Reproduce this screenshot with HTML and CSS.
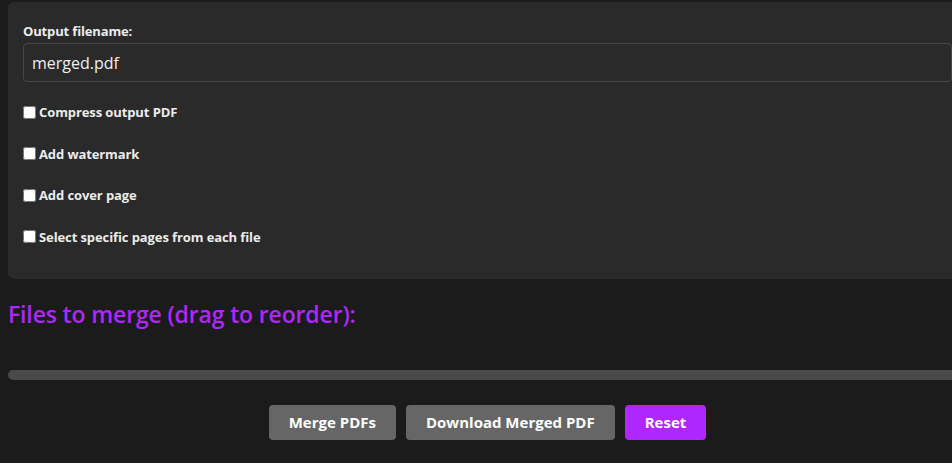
FILE: index.html
```html
<!DOCTYPE html>
<html lang="en">
<head>
<meta charset="utf-8">
<title>Merge PDFs</title>
<link rel="stylesheet" href="styles.css">
</head>
<body>
<main class="container">
  <section class="panel">
    <label class="field-label" for="outname">Output filename:</label>
    <input id="outname" class="text-input" type="text" value="merged.pdf">
    <div class="options">
      <label class="option"><input type="checkbox" class="check"> Compress output PDF</label>
      <label class="option"><input type="checkbox" class="check"> Add watermark</label>
      <label class="option"><input type="checkbox" class="check"> Add cover page</label>
      <label class="option"><input type="checkbox" class="check"> Select specific pages from each file</label>
    </div>
  </section>
  <h2 class="files-title">Files to merge (drag to reorder):</h2>
  <div class="progress"></div>
  <div class="actions">
    <button class="btn btn-gray">Merge PDFs</button>
    <button class="btn btn-gray">Download Merged PDF</button>
    <button class="btn btn-purple">Reset</button>
  </div>
</main>
</body>
</html>
```
FILE: styles.css
```css
html {
  overflow: hidden;
  background: #1b1b1b;
}
body {
  margin: 0;
  background: #1b1b1b;
  color: #ececec;
  font-family: "Open Sans", "Noto Sans", sans-serif;
}
.container {
  margin-left: 8px;
  width: 959px;
}
.panel {
  margin-top: 2px;
  background: #2a2a2a;
  border-radius: 6px;
  padding: 20px 15px 33px;
}
.field-label {
  display: block;
  font-size: 13px;
  font-weight: 700;
  line-height: 18px;
  letter-spacing: -0.15px;
  margin-bottom: 3px;
}
.text-input {
  display: block;
  box-sizing: border-box;
  width: 100%;
  height: 39px;
  margin: 0;
  padding: 0 8px;
  background: #2a2a2a;
  color: #f0f0f0;
  border: 1px solid #464646;
  border-radius: 4px;
  font-family: inherit;
  font-size: 16px;
  outline: none;
}
.options {
  margin-top: 21px;
  display: flex;
  flex-direction: column;
  gap: 23.5px;
}
.option {
  display: flex;
  align-items: center;
  height: 18px;
  font-size: 13px;
  font-weight: 700;
  line-height: 18px;
  letter-spacing: -0.1px;
}
.check {
  width: 13px;
  height: 13px;
  margin: 0 3px 0 0;
}
.files-title {
  margin: 21px 0 0;
  font-size: 23px;
  font-weight: 600;
  line-height: 29px;
  letter-spacing: -0.15px;
  color: #b026ff;
}
.progress {
  margin-top: 41px;
  height: 10px;
  border-radius: 5px;
  background: #4a4a4a;
}
.actions {
  margin-top: 25px;
  display: flex;
  justify-content: center;
  gap: 10px;
}
.btn {
  height: 35px;
  padding: 0 20px;
  border: none;
  border-radius: 4px;
  color: #ffffff;
  font-family: inherit;
  font-size: 15px;
  font-weight: 700;
  cursor: pointer;
}
.btn-gray {
  background: #666666;
}
.btn-purple {
  background: #b026ff;
}
```
